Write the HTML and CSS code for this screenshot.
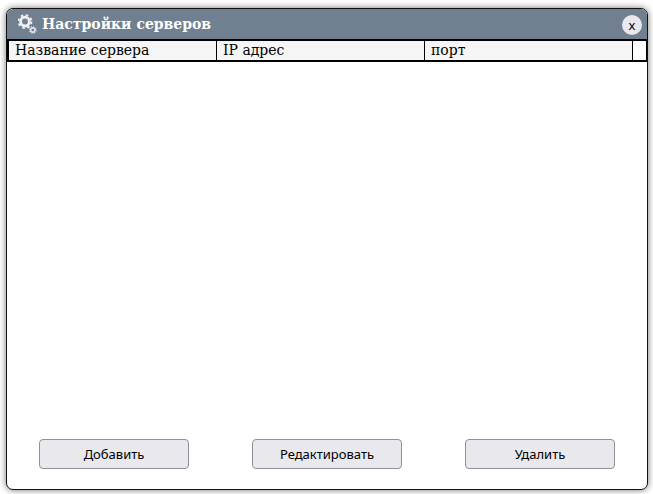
FILE: index.html
```html
<!DOCTYPE html>
<html lang="en">

<head>
  <meta charset="UTF-8">
  <title>Настройки серверов</title>
  <link rel="stylesheet" href="styles.css">
</head>

<body>
  <div class="window">
    <div class="title-bar">
      <svg class="gear-icon" width="20" height="20" viewBox="0 0 20 20">
        <circle cx="7" cy="7.6" r="4.4" fill="none" stroke="#eef0f1" stroke-width="2.8"/>
        <circle cx="7" cy="7.6" r="6.5" fill="none" stroke="#eef0f1" stroke-width="1.8" stroke-dasharray="2.55 2.55"/>
        <circle cx="14.8" cy="16" r="2.1" fill="none" stroke="#dfe2e4" stroke-width="1.6"/>
        <circle cx="14.8" cy="16" r="3.3" fill="none" stroke="#dfe2e4" stroke-width="1.1" stroke-dasharray="1.3 1.29"/>
      </svg>
      <span class="title">Настройки серверов</span>
      <button class="close-btn">x</button>
    </div>

    <div class="table-head">
      <div class="head-cell">Название сервера</div>
      <div class="head-cell">IP адрес</div>
      <div class="head-cell">порт</div>
      <div class="head-spacer"></div>
    </div>

    <div class="table-body"></div>

    <div class="actions">
      <button class="action-btn">Добавить</button>
      <button class="action-btn">Редактировать</button>
      <button class="action-btn">Удалить</button>
    </div>
  </div>
</body>

</html>
```

FILE: styles.css
```css
html,
body {
  height: 100%;
}

body {
  margin: 0;
  padding: 8px 5px 4px 6px;
  box-sizing: border-box;
  background-color: #fff;
  font-family: "DejaVu Serif", serif;
}

.window {
  display: flex;
  flex-direction: column;
  height: 482px;
  box-sizing: border-box;
  background: #fff;
  border: 1px solid #111;
  border-radius: 7px;
  box-shadow: 0 0 7px rgba(0, 0, 0, 0.55);
  overflow: hidden;
}

.title-bar {
  display: flex;
  align-items: center;
  height: 30px;
  padding: 0 5px 0 11px;
  background-color: #708090;
}

.gear-icon {
  margin-right: 4px;
}

.title {
  flex: 1;
  color: #fff;
  font-size: 14px;
  font-weight: bold;
}

.close-btn {
  width: 20px;
  height: 20px;
  margin-top: 1px;
  padding: 0;
  border: none;
  border-radius: 50%;
  background-color: #e9e9ed;
  color: #000;
  font-family: "Noto Sans", sans-serif;
  font-size: 13px;
}

.table-head {
  display: flex;
  height: 19px;
  border: 2px solid #000;
  border-right: 1px solid #000;
}

.head-cell {
  width: 208px;
  box-sizing: border-box;
  padding-left: 6px;
  border-right: 1px solid #000;
  background-color: #f5f5f5;
  color: #000;
  font-size: 14px;
  line-height: 19px;
}

.head-spacer {
  flex: 1;
}

.table-body {
  flex: 1;
}

.actions {
  display: flex;
  justify-content: space-between;
  padding: 0 32px 20px;
}

.action-btn {
  width: 150px;
  height: 30px;
  padding: 0;
  border: 1px solid #8f8f9d;
  border-radius: 4px;
  background-color: #e9e9ed;
  color: #000;
  font-family: "Noto Sans", sans-serif;
  font-size: 13px;
}
```
